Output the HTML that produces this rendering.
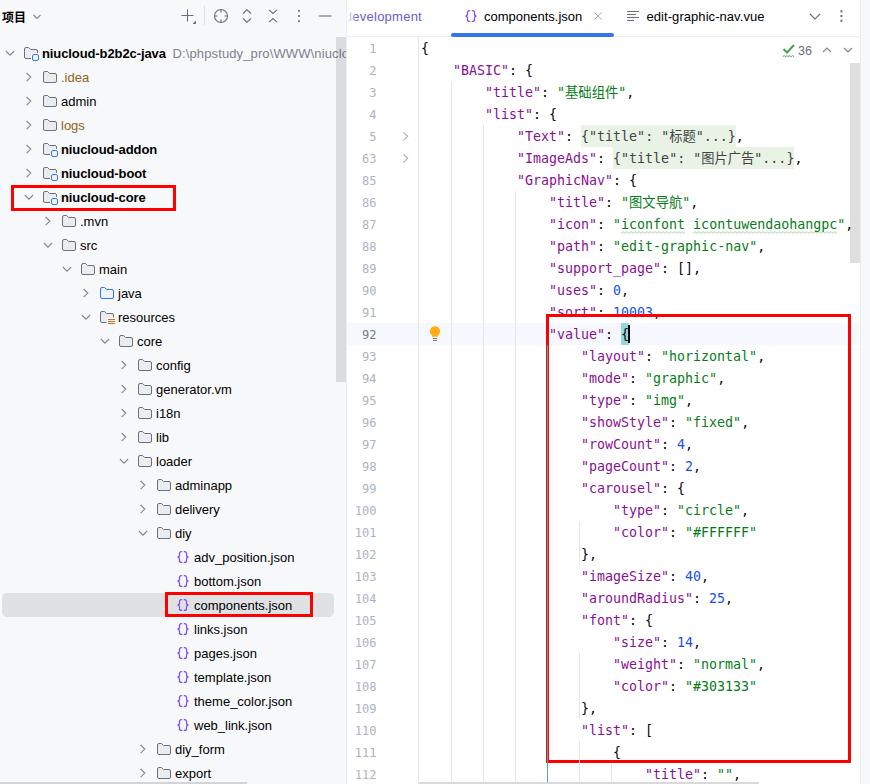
<!DOCTYPE html>
<html><head><meta charset="utf-8"><title>IDE</title>
<style>
html,body{margin:0;padding:0}
body{width:870px;height:784px;overflow:hidden;position:relative;background:#fff;font-family:"Liberation Sans","Noto Sans CJK SC",sans-serif;font-size:13px;color:#000}
#left{position:absolute;left:0;top:0;width:346px;height:784px;background:#f7f8fa;overflow:hidden}
#left .row{position:absolute;left:0;width:346px;height:24px}
#left .row.sel::before{content:"";position:absolute;left:2px;top:0;width:332px;height:24px;border-radius:5px;background:#dfe1e5}
.p{position:absolute;top:4px;width:16px;height:16px}
.p svg{display:block}
.lb{position:absolute;top:1px;line-height:24px;white-space:nowrap;font-size:13px}
.lb.b{font-weight:bold;letter-spacing:-0.1px}
.lb.ex{color:#8f6321}
.path{font-weight:normal;color:#7d8190;margin-left:3px;letter-spacing:0.12px}
#hdr{position:absolute;left:0;top:0;width:346px;height:37px}
#hdr .t{position:absolute;left:2px;top:8px;font-size:12px;font-weight:bold;line-height:20px}
#hdr svg{position:absolute;left:0;top:0}
#vs{position:absolute;left:336px;top:37px;width:10px;height:345px;background:rgba(0,0,0,0.11)}
#hs{position:absolute;left:0;top:782px;width:247px;height:2px;background:#d4d4d6}
#ed{position:absolute;left:347px;top:0;width:513px;height:784px;background:#fff;overflow:hidden}
#sep{position:absolute;left:346px;top:0;width:1px;height:784px;background:#ebecf0}
#tabs{z-index:5;position:absolute;left:0;top:0;width:513px;height:36px;border-bottom:1px solid #ebecf0;background:#fff}
#gut{position:absolute;left:71px;top:37px;width:1px;height:747px;background:#e4e5ea;z-index:3}
.ln{position:absolute;left:0;width:513px;height:22px;font-family:"DejaVu Sans Mono","Liberation Mono","Noto Sans CJK SC",monospace;font-size:13.3px;line-height:24px;white-space:pre}
.ln.cur{background:#f5f8fe}
.ln.cur .num{color:#767a8a}
.num{position:absolute;left:0;top:0;width:29.5px;text-align:right;color:#aeb3c2;font-size:12px}
.code{position:absolute;top:0;color:#080808;height:22px}
.k{color:#871094}
.s{color:#067d17}
.n{color:#1750eb}
.fold{background:#e9f3e5;display:inline-block;height:22px;color:#444;vertical-align:top}
.fold span{color:#444}
.wv{text-decoration:underline wavy #b5d6a8 1px;text-underline-offset:3px}
.br{background:#93d9d9;display:inline-block;height:22px;vertical-align:top}
.caret{position:absolute;width:2px;height:18px;background:#000;top:2px;margin-left:-1px}
.guide{position:absolute;width:1px;background:#e4e5ea;z-index:3}
#rs{position:absolute;left:860px;top:0;width:10px;height:784px;background:#f7f8fa;border-left:1px solid #ebecf0;box-sizing:border-box}
#evs{z-index:5;position:absolute;left:503px;top:63px;width:10px;height:200px;background:rgba(0,0,0,0.125)}
#ehs{z-index:5;position:absolute;left:72px;top:782px;width:340px;height:2px;background:#d9d9d9}
.red{position:absolute;border:3px solid #f00;box-sizing:border-box}
.tab{position:absolute;top:0;height:36px;line-height:34px;font-size:13px;white-space:nowrap}
#insp{z-index:5;position:absolute;left:0;top:37px;width:513px;height:26px}
</style></head><body>
<div id="left">
<div id="hdr"><span class="t">项目</span>
<svg width="346" height="37" viewBox="0 0 346 37" fill="none" stroke="#6c707e" stroke-width="1.1">
<path d="M33.5 15 L37 18.5 L40.5 15" stroke="#818594"/>
<path d="M187.5 9.5 V21.5 M181.5 15.5 H193.5"/>
<path d="M196 20.5 V24 H192.5 Z" fill="#6c707e" stroke="none"/>
<path d="M204.5 6 V25" stroke="#dcdee4" stroke-width="1"/>
<circle cx="221" cy="16" r="6.5"/>
<path d="M221 9.5 V12.5 M221 19.5 V22.5 M214.5 16 H217.5 M224.5 16 H227.5"/>
<path d="M243 13.5 L247 9.8 L251 13.5 M243 18.5 L247 22.2 L251 18.5"/>
<path d="M269 9.8 L273 13.5 L277 9.8 M269 22.2 L273 18.5 L277 22.2"/>
<g fill="#7d8190" stroke="none"><rect x="298" y="9.8" width="2" height="2"/><rect x="298" y="15" width="2" height="2"/><rect x="298" y="20.2" width="2" height="2"/></g>
<path d="M318.5 16 H331.5"/>
</svg>
</div>
<div class="row" style="top:41px"><span style="left:2px" class="p"><svg class="ch" width="16" height="16" viewBox="0 0 16 16"><path d="M3.9 6 L8 10.1 L12.1 6" fill="none" stroke="#818594" stroke-width="1.1"/></svg></span><span style="left:23px" class="p"><svg class="ic" width="16" height="16" viewBox="0 0 16 16"><path d="M8 13.5 H3 Q1.5 13.5 1.5 12 V4 Q1.5 2.5 3 2.5 H5.6 L7.6 4.5 H13 Q14.5 4.5 14.5 6 V8 H8 Z" fill="#ebecf0" stroke="none"/><path d="M8 13.5 H3 Q1.5 13.5 1.5 12 V4 Q1.5 2.5 3 2.5 H5.6 L7.6 4.5 H13 Q14.5 4.5 14.5 6 V8" fill="none" stroke="#6c707e" stroke-width="1"/><rect x="9.5" y="9.5" width="6" height="6" rx="1.5" fill="#edf3ff" stroke="#3574f0" stroke-width="1"/></svg></span><span class="lb b" style="left:42px">niucloud-b2b2c-java<span class="path"> D:\phpstudy_pro\WWW\niucloud-b2b2c-java</span></span></div>
<div class="row" style="top:65px"><span style="left:21px" class="p"><svg class="ch" width="16" height="16" viewBox="0 0 16 16"><path d="M5.6 4 L9.8 8.1 L5.6 12.2" fill="none" stroke="#818594" stroke-width="1.1"/></svg></span><span style="left:42px" class="p"><svg class="ic" width="16" height="16" viewBox="0 0 16 16"><path d="M1.5 4 Q1.5 2.5 3 2.5 H5.6 L7.6 4.5 H13 Q14.5 4.5 14.5 6 V12 Q14.5 13.5 13 13.5 H3 Q1.5 13.5 1.5 12 Z" fill="#ebecf0" stroke="#6c707e" stroke-width="1"/></svg></span><span class="lb ex" style="left:61px">.idea</span></div>
<div class="row" style="top:89px"><span style="left:21px" class="p"><svg class="ch" width="16" height="16" viewBox="0 0 16 16"><path d="M5.6 4 L9.8 8.1 L5.6 12.2" fill="none" stroke="#818594" stroke-width="1.1"/></svg></span><span style="left:42px" class="p"><svg class="ic" width="16" height="16" viewBox="0 0 16 16"><path d="M1.5 4 Q1.5 2.5 3 2.5 H5.6 L7.6 4.5 H13 Q14.5 4.5 14.5 6 V12 Q14.5 13.5 13 13.5 H3 Q1.5 13.5 1.5 12 Z" fill="#ebecf0" stroke="#6c707e" stroke-width="1"/></svg></span><span class="lb" style="left:61px">admin</span></div>
<div class="row" style="top:113px"><span style="left:21px" class="p"><svg class="ch" width="16" height="16" viewBox="0 0 16 16"><path d="M5.6 4 L9.8 8.1 L5.6 12.2" fill="none" stroke="#818594" stroke-width="1.1"/></svg></span><span style="left:42px" class="p"><svg class="ic" width="16" height="16" viewBox="0 0 16 16"><path d="M1.5 4 Q1.5 2.5 3 2.5 H5.6 L7.6 4.5 H13 Q14.5 4.5 14.5 6 V12 Q14.5 13.5 13 13.5 H3 Q1.5 13.5 1.5 12 Z" fill="#ebecf0" stroke="#6c707e" stroke-width="1"/></svg></span><span class="lb ex" style="left:61px">logs</span></div>
<div class="row" style="top:137px"><span style="left:21px" class="p"><svg class="ch" width="16" height="16" viewBox="0 0 16 16"><path d="M5.6 4 L9.8 8.1 L5.6 12.2" fill="none" stroke="#818594" stroke-width="1.1"/></svg></span><span style="left:42px" class="p"><svg class="ic" width="16" height="16" viewBox="0 0 16 16"><path d="M8 13.5 H3 Q1.5 13.5 1.5 12 V4 Q1.5 2.5 3 2.5 H5.6 L7.6 4.5 H13 Q14.5 4.5 14.5 6 V8 H8 Z" fill="#ebecf0" stroke="none"/><path d="M8 13.5 H3 Q1.5 13.5 1.5 12 V4 Q1.5 2.5 3 2.5 H5.6 L7.6 4.5 H13 Q14.5 4.5 14.5 6 V8" fill="none" stroke="#6c707e" stroke-width="1"/><rect x="9.5" y="9.5" width="6" height="6" rx="1.5" fill="#edf3ff" stroke="#3574f0" stroke-width="1"/></svg></span><span class="lb b" style="left:61px">niucloud-addon</span></div>
<div class="row" style="top:161px"><span style="left:21px" class="p"><svg class="ch" width="16" height="16" viewBox="0 0 16 16"><path d="M5.6 4 L9.8 8.1 L5.6 12.2" fill="none" stroke="#818594" stroke-width="1.1"/></svg></span><span style="left:42px" class="p"><svg class="ic" width="16" height="16" viewBox="0 0 16 16"><path d="M8 13.5 H3 Q1.5 13.5 1.5 12 V4 Q1.5 2.5 3 2.5 H5.6 L7.6 4.5 H13 Q14.5 4.5 14.5 6 V8 H8 Z" fill="#ebecf0" stroke="none"/><path d="M8 13.5 H3 Q1.5 13.5 1.5 12 V4 Q1.5 2.5 3 2.5 H5.6 L7.6 4.5 H13 Q14.5 4.5 14.5 6 V8" fill="none" stroke="#6c707e" stroke-width="1"/><rect x="9.5" y="9.5" width="6" height="6" rx="1.5" fill="#edf3ff" stroke="#3574f0" stroke-width="1"/></svg></span><span class="lb b" style="left:61px">niucloud-boot</span></div>
<div class="row" style="top:185px"><span style="left:21px" class="p"><svg class="ch" width="16" height="16" viewBox="0 0 16 16"><path d="M3.9 6 L8 10.1 L12.1 6" fill="none" stroke="#818594" stroke-width="1.1"/></svg></span><span style="left:42px" class="p"><svg class="ic" width="16" height="16" viewBox="0 0 16 16"><path d="M8 13.5 H3 Q1.5 13.5 1.5 12 V4 Q1.5 2.5 3 2.5 H5.6 L7.6 4.5 H13 Q14.5 4.5 14.5 6 V8 H8 Z" fill="#ebecf0" stroke="none"/><path d="M8 13.5 H3 Q1.5 13.5 1.5 12 V4 Q1.5 2.5 3 2.5 H5.6 L7.6 4.5 H13 Q14.5 4.5 14.5 6 V8" fill="none" stroke="#6c707e" stroke-width="1"/><rect x="9.5" y="9.5" width="6" height="6" rx="1.5" fill="#edf3ff" stroke="#3574f0" stroke-width="1"/></svg></span><span class="lb b" style="left:61px">niucloud-core</span></div>
<div class="row" style="top:209px"><span style="left:40px" class="p"><svg class="ch" width="16" height="16" viewBox="0 0 16 16"><path d="M5.6 4 L9.8 8.1 L5.6 12.2" fill="none" stroke="#818594" stroke-width="1.1"/></svg></span><span style="left:61px" class="p"><svg class="ic" width="16" height="16" viewBox="0 0 16 16"><path d="M1.5 4 Q1.5 2.5 3 2.5 H5.6 L7.6 4.5 H13 Q14.5 4.5 14.5 6 V12 Q14.5 13.5 13 13.5 H3 Q1.5 13.5 1.5 12 Z" fill="#ebecf0" stroke="#6c707e" stroke-width="1"/></svg></span><span class="lb" style="left:80px">.mvn</span></div>
<div class="row" style="top:233px"><span style="left:40px" class="p"><svg class="ch" width="16" height="16" viewBox="0 0 16 16"><path d="M3.9 6 L8 10.1 L12.1 6" fill="none" stroke="#818594" stroke-width="1.1"/></svg></span><span style="left:61px" class="p"><svg class="ic" width="16" height="16" viewBox="0 0 16 16"><path d="M1.5 4 Q1.5 2.5 3 2.5 H5.6 L7.6 4.5 H13 Q14.5 4.5 14.5 6 V12 Q14.5 13.5 13 13.5 H3 Q1.5 13.5 1.5 12 Z" fill="#ebecf0" stroke="#6c707e" stroke-width="1"/></svg></span><span class="lb" style="left:80px">src</span></div>
<div class="row" style="top:257px"><span style="left:59px" class="p"><svg class="ch" width="16" height="16" viewBox="0 0 16 16"><path d="M3.9 6 L8 10.1 L12.1 6" fill="none" stroke="#818594" stroke-width="1.1"/></svg></span><span style="left:80px" class="p"><svg class="ic" width="16" height="16" viewBox="0 0 16 16"><path d="M1.5 4 Q1.5 2.5 3 2.5 H5.6 L7.6 4.5 H13 Q14.5 4.5 14.5 6 V12 Q14.5 13.5 13 13.5 H3 Q1.5 13.5 1.5 12 Z" fill="#ebecf0" stroke="#6c707e" stroke-width="1"/></svg></span><span class="lb" style="left:99px">main</span></div>
<div class="row" style="top:281px"><span style="left:78px" class="p"><svg class="ch" width="16" height="16" viewBox="0 0 16 16"><path d="M5.6 4 L9.8 8.1 L5.6 12.2" fill="none" stroke="#818594" stroke-width="1.1"/></svg></span><span style="left:99px" class="p"><svg class="ic" width="16" height="16" viewBox="0 0 16 16"><path d="M1.5 4 Q1.5 2.5 3 2.5 H5.6 L7.6 4.5 H13 Q14.5 4.5 14.5 6 V12 Q14.5 13.5 13 13.5 H3 Q1.5 13.5 1.5 12 Z" fill="#edf3ff" stroke="#3574f0" stroke-width="1"/></svg></span><span class="lb" style="left:118px">java</span></div>
<div class="row" style="top:305px"><span style="left:78px" class="p"><svg class="ch" width="16" height="16" viewBox="0 0 16 16"><path d="M3.9 6 L8 10.1 L12.1 6" fill="none" stroke="#818594" stroke-width="1.1"/></svg></span><span style="left:99px" class="p"><svg class="ic" width="16" height="16" viewBox="0 0 16 16"><path d="M8 13.5 H3 Q1.5 13.5 1.5 12 V4 Q1.5 2.5 3 2.5 H5.6 L7.6 4.5 H13 Q14.5 4.5 14.5 6 V8.5 H7.5 V13.5" fill="#ebecf0" stroke="none"/><path d="M7.5 13.5 H3 Q1.5 13.5 1.5 12 V4 Q1.5 2.5 3 2.5 H5.6 L7.6 4.5 H13 Q14.5 4.5 14.5 6 V8.5" fill="none" stroke="#6c707e" stroke-width="1"/><path d="M9 10.5 H16 M9 12.5 H16 M9 14.5 H16" stroke="#e66d17" stroke-width="1.1"/></svg></span><span class="lb" style="left:118px">resources</span></div>
<div class="row" style="top:329px"><span style="left:97px" class="p"><svg class="ch" width="16" height="16" viewBox="0 0 16 16"><path d="M3.9 6 L8 10.1 L12.1 6" fill="none" stroke="#818594" stroke-width="1.1"/></svg></span><span style="left:118px" class="p"><svg class="ic" width="16" height="16" viewBox="0 0 16 16"><path d="M1.5 4 Q1.5 2.5 3 2.5 H5.6 L7.6 4.5 H13 Q14.5 4.5 14.5 6 V12 Q14.5 13.5 13 13.5 H3 Q1.5 13.5 1.5 12 Z" fill="#ebecf0" stroke="#6c707e" stroke-width="1"/></svg></span><span class="lb" style="left:137px">core</span></div>
<div class="row" style="top:353px"><span style="left:116px" class="p"><svg class="ch" width="16" height="16" viewBox="0 0 16 16"><path d="M5.6 4 L9.8 8.1 L5.6 12.2" fill="none" stroke="#818594" stroke-width="1.1"/></svg></span><span style="left:137px" class="p"><svg class="ic" width="16" height="16" viewBox="0 0 16 16"><path d="M1.5 4 Q1.5 2.5 3 2.5 H5.6 L7.6 4.5 H13 Q14.5 4.5 14.5 6 V12 Q14.5 13.5 13 13.5 H3 Q1.5 13.5 1.5 12 Z" fill="#ebecf0" stroke="#6c707e" stroke-width="1"/></svg></span><span class="lb" style="left:156px">config</span></div>
<div class="row" style="top:377px"><span style="left:116px" class="p"><svg class="ch" width="16" height="16" viewBox="0 0 16 16"><path d="M5.6 4 L9.8 8.1 L5.6 12.2" fill="none" stroke="#818594" stroke-width="1.1"/></svg></span><span style="left:137px" class="p"><svg class="ic" width="16" height="16" viewBox="0 0 16 16"><path d="M1.5 4 Q1.5 2.5 3 2.5 H5.6 L7.6 4.5 H13 Q14.5 4.5 14.5 6 V12 Q14.5 13.5 13 13.5 H3 Q1.5 13.5 1.5 12 Z" fill="#ebecf0" stroke="#6c707e" stroke-width="1"/></svg></span><span class="lb" style="left:156px">generator.vm</span></div>
<div class="row" style="top:401px"><span style="left:116px" class="p"><svg class="ch" width="16" height="16" viewBox="0 0 16 16"><path d="M5.6 4 L9.8 8.1 L5.6 12.2" fill="none" stroke="#818594" stroke-width="1.1"/></svg></span><span style="left:137px" class="p"><svg class="ic" width="16" height="16" viewBox="0 0 16 16"><path d="M1.5 4 Q1.5 2.5 3 2.5 H5.6 L7.6 4.5 H13 Q14.5 4.5 14.5 6 V12 Q14.5 13.5 13 13.5 H3 Q1.5 13.5 1.5 12 Z" fill="#ebecf0" stroke="#6c707e" stroke-width="1"/></svg></span><span class="lb" style="left:156px">i18n</span></div>
<div class="row" style="top:425px"><span style="left:116px" class="p"><svg class="ch" width="16" height="16" viewBox="0 0 16 16"><path d="M5.6 4 L9.8 8.1 L5.6 12.2" fill="none" stroke="#818594" stroke-width="1.1"/></svg></span><span style="left:137px" class="p"><svg class="ic" width="16" height="16" viewBox="0 0 16 16"><path d="M1.5 4 Q1.5 2.5 3 2.5 H5.6 L7.6 4.5 H13 Q14.5 4.5 14.5 6 V12 Q14.5 13.5 13 13.5 H3 Q1.5 13.5 1.5 12 Z" fill="#ebecf0" stroke="#6c707e" stroke-width="1"/></svg></span><span class="lb" style="left:156px">lib</span></div>
<div class="row" style="top:449px"><span style="left:116px" class="p"><svg class="ch" width="16" height="16" viewBox="0 0 16 16"><path d="M3.9 6 L8 10.1 L12.1 6" fill="none" stroke="#818594" stroke-width="1.1"/></svg></span><span style="left:137px" class="p"><svg class="ic" width="16" height="16" viewBox="0 0 16 16"><path d="M1.5 4 Q1.5 2.5 3 2.5 H5.6 L7.6 4.5 H13 Q14.5 4.5 14.5 6 V12 Q14.5 13.5 13 13.5 H3 Q1.5 13.5 1.5 12 Z" fill="#ebecf0" stroke="#6c707e" stroke-width="1"/></svg></span><span class="lb" style="left:156px">loader</span></div>
<div class="row" style="top:473px"><span style="left:135px" class="p"><svg class="ch" width="16" height="16" viewBox="0 0 16 16"><path d="M5.6 4 L9.8 8.1 L5.6 12.2" fill="none" stroke="#818594" stroke-width="1.1"/></svg></span><span style="left:156px" class="p"><svg class="ic" width="16" height="16" viewBox="0 0 16 16"><path d="M1.5 4 Q1.5 2.5 3 2.5 H5.6 L7.6 4.5 H13 Q14.5 4.5 14.5 6 V12 Q14.5 13.5 13 13.5 H3 Q1.5 13.5 1.5 12 Z" fill="#ebecf0" stroke="#6c707e" stroke-width="1"/></svg></span><span class="lb" style="left:175px">adminapp</span></div>
<div class="row" style="top:497px"><span style="left:135px" class="p"><svg class="ch" width="16" height="16" viewBox="0 0 16 16"><path d="M5.6 4 L9.8 8.1 L5.6 12.2" fill="none" stroke="#818594" stroke-width="1.1"/></svg></span><span style="left:156px" class="p"><svg class="ic" width="16" height="16" viewBox="0 0 16 16"><path d="M1.5 4 Q1.5 2.5 3 2.5 H5.6 L7.6 4.5 H13 Q14.5 4.5 14.5 6 V12 Q14.5 13.5 13 13.5 H3 Q1.5 13.5 1.5 12 Z" fill="#ebecf0" stroke="#6c707e" stroke-width="1"/></svg></span><span class="lb" style="left:175px">delivery</span></div>
<div class="row" style="top:521px"><span style="left:135px" class="p"><svg class="ch" width="16" height="16" viewBox="0 0 16 16"><path d="M3.9 6 L8 10.1 L12.1 6" fill="none" stroke="#818594" stroke-width="1.1"/></svg></span><span style="left:156px" class="p"><svg class="ic" width="16" height="16" viewBox="0 0 16 16"><path d="M1.5 4 Q1.5 2.5 3 2.5 H5.6 L7.6 4.5 H13 Q14.5 4.5 14.5 6 V12 Q14.5 13.5 13 13.5 H3 Q1.5 13.5 1.5 12 Z" fill="#ebecf0" stroke="#6c707e" stroke-width="1"/></svg></span><span class="lb" style="left:175px">diy</span></div>
<div class="row" style="top:545px"><span style="left:175px" class="p"><svg class="ic" width="16" height="16" viewBox="0 0 16 16"><path d="M7.2 2.6 H6.5 Q4.5 2.6 4.5 4.6 V6 Q4.5 8 2.4 8 Q4.5 8 4.5 10 V11.4 Q4.5 13.4 6.5 13.4 H7.2 M8.8 2.6 H9.5 Q11.5 2.6 11.5 4.6 V6 Q11.5 8 13.6 8 Q11.5 8 11.5 10 V11.4 Q11.5 13.4 9.5 13.4 H8.8" fill="none" stroke="#834df0" stroke-width="1.25"/></svg></span><span class="lb" style="left:194px">adv_position.json</span></div>
<div class="row" style="top:569px"><span style="left:175px" class="p"><svg class="ic" width="16" height="16" viewBox="0 0 16 16"><path d="M7.2 2.6 H6.5 Q4.5 2.6 4.5 4.6 V6 Q4.5 8 2.4 8 Q4.5 8 4.5 10 V11.4 Q4.5 13.4 6.5 13.4 H7.2 M8.8 2.6 H9.5 Q11.5 2.6 11.5 4.6 V6 Q11.5 8 13.6 8 Q11.5 8 11.5 10 V11.4 Q11.5 13.4 9.5 13.4 H8.8" fill="none" stroke="#834df0" stroke-width="1.25"/></svg></span><span class="lb" style="left:194px">bottom.json</span></div>
<div class="row sel" style="top:593px"><span style="left:175px" class="p"><svg class="ic" width="16" height="16" viewBox="0 0 16 16"><path d="M7.2 2.6 H6.5 Q4.5 2.6 4.5 4.6 V6 Q4.5 8 2.4 8 Q4.5 8 4.5 10 V11.4 Q4.5 13.4 6.5 13.4 H7.2 M8.8 2.6 H9.5 Q11.5 2.6 11.5 4.6 V6 Q11.5 8 13.6 8 Q11.5 8 11.5 10 V11.4 Q11.5 13.4 9.5 13.4 H8.8" fill="none" stroke="#834df0" stroke-width="1.25"/></svg></span><span class="lb" style="left:194px">components.json</span></div>
<div class="row" style="top:617px"><span style="left:175px" class="p"><svg class="ic" width="16" height="16" viewBox="0 0 16 16"><path d="M7.2 2.6 H6.5 Q4.5 2.6 4.5 4.6 V6 Q4.5 8 2.4 8 Q4.5 8 4.5 10 V11.4 Q4.5 13.4 6.5 13.4 H7.2 M8.8 2.6 H9.5 Q11.5 2.6 11.5 4.6 V6 Q11.5 8 13.6 8 Q11.5 8 11.5 10 V11.4 Q11.5 13.4 9.5 13.4 H8.8" fill="none" stroke="#834df0" stroke-width="1.25"/></svg></span><span class="lb" style="left:194px">links.json</span></div>
<div class="row" style="top:641px"><span style="left:175px" class="p"><svg class="ic" width="16" height="16" viewBox="0 0 16 16"><path d="M7.2 2.6 H6.5 Q4.5 2.6 4.5 4.6 V6 Q4.5 8 2.4 8 Q4.5 8 4.5 10 V11.4 Q4.5 13.4 6.5 13.4 H7.2 M8.8 2.6 H9.5 Q11.5 2.6 11.5 4.6 V6 Q11.5 8 13.6 8 Q11.5 8 11.5 10 V11.4 Q11.5 13.4 9.5 13.4 H8.8" fill="none" stroke="#834df0" stroke-width="1.25"/></svg></span><span class="lb" style="left:194px">pages.json</span></div>
<div class="row" style="top:665px"><span style="left:175px" class="p"><svg class="ic" width="16" height="16" viewBox="0 0 16 16"><path d="M7.2 2.6 H6.5 Q4.5 2.6 4.5 4.6 V6 Q4.5 8 2.4 8 Q4.5 8 4.5 10 V11.4 Q4.5 13.4 6.5 13.4 H7.2 M8.8 2.6 H9.5 Q11.5 2.6 11.5 4.6 V6 Q11.5 8 13.6 8 Q11.5 8 11.5 10 V11.4 Q11.5 13.4 9.5 13.4 H8.8" fill="none" stroke="#834df0" stroke-width="1.25"/></svg></span><span class="lb" style="left:194px">template.json</span></div>
<div class="row" style="top:689px"><span style="left:175px" class="p"><svg class="ic" width="16" height="16" viewBox="0 0 16 16"><path d="M7.2 2.6 H6.5 Q4.5 2.6 4.5 4.6 V6 Q4.5 8 2.4 8 Q4.5 8 4.5 10 V11.4 Q4.5 13.4 6.5 13.4 H7.2 M8.8 2.6 H9.5 Q11.5 2.6 11.5 4.6 V6 Q11.5 8 13.6 8 Q11.5 8 11.5 10 V11.4 Q11.5 13.4 9.5 13.4 H8.8" fill="none" stroke="#834df0" stroke-width="1.25"/></svg></span><span class="lb" style="left:194px">theme_color.json</span></div>
<div class="row" style="top:713px"><span style="left:175px" class="p"><svg class="ic" width="16" height="16" viewBox="0 0 16 16"><path d="M7.2 2.6 H6.5 Q4.5 2.6 4.5 4.6 V6 Q4.5 8 2.4 8 Q4.5 8 4.5 10 V11.4 Q4.5 13.4 6.5 13.4 H7.2 M8.8 2.6 H9.5 Q11.5 2.6 11.5 4.6 V6 Q11.5 8 13.6 8 Q11.5 8 11.5 10 V11.4 Q11.5 13.4 9.5 13.4 H8.8" fill="none" stroke="#834df0" stroke-width="1.25"/></svg></span><span class="lb" style="left:194px">web_link.json</span></div>
<div class="row" style="top:737px"><span style="left:135px" class="p"><svg class="ch" width="16" height="16" viewBox="0 0 16 16"><path d="M5.6 4 L9.8 8.1 L5.6 12.2" fill="none" stroke="#818594" stroke-width="1.1"/></svg></span><span style="left:156px" class="p"><svg class="ic" width="16" height="16" viewBox="0 0 16 16"><path d="M1.5 4 Q1.5 2.5 3 2.5 H5.6 L7.6 4.5 H13 Q14.5 4.5 14.5 6 V12 Q14.5 13.5 13 13.5 H3 Q1.5 13.5 1.5 12 Z" fill="#ebecf0" stroke="#6c707e" stroke-width="1"/></svg></span><span class="lb" style="left:175px">diy_form</span></div>
<div class="row" style="top:761px"><span style="left:135px" class="p"><svg class="ch" width="16" height="16" viewBox="0 0 16 16"><path d="M5.6 4 L9.8 8.1 L5.6 12.2" fill="none" stroke="#818594" stroke-width="1.1"/></svg></span><span style="left:156px" class="p"><svg class="ic" width="16" height="16" viewBox="0 0 16 16"><path d="M1.5 4 Q1.5 2.5 3 2.5 H5.6 L7.6 4.5 H13 Q14.5 4.5 14.5 6 V12 Q14.5 13.5 13 13.5 H3 Q1.5 13.5 1.5 12 Z" fill="#ebecf0" stroke="#6c707e" stroke-width="1"/></svg></span><span class="lb" style="left:175px">export</span></div>
<div id="vs"></div><div id="hs"></div>
</div>
<div id="sep"></div>
<div id="ed">
<div id="gut"></div>
<div class="guide" style="left:104px;top:81px;height:704px;background:#e4e5ea"></div>
<div class="guide" style="left:136px;top:125px;height:660px;background:#e4e5ea"></div>
<div class="guide" style="left:168px;top:191px;height:594px;background:#e4e5ea"></div>
<div class="guide" style="left:200px;top:345px;height:440px;background:#5aa9a9"></div>
<div class="guide" style="left:232px;top:521px;height:44px;background:#e4e5ea"></div>
<div class="guide" style="left:232px;top:653px;height:66px;background:#e4e5ea"></div>
<div class="guide" style="left:232px;top:741px;height:44px;background:#e4e5ea"></div>
<div class="guide" style="left:264px;top:763px;height:22px;background:#e4e5ea"></div>
<div class="ln" style="top:37px"><span class="num">1</span><span class="code" style="left:74px">{</span></div>
<div class="ln" style="top:59px"><span class="num">2</span><span class="code" style="left:106px"><span class="k">"BASIC"</span>: {</span></div>
<div class="ln" style="top:81px"><span class="num">3</span><span class="code" style="left:138px"><span class="k">"title"</span>: <span class="s">"基础组件"</span>,</span></div>
<div class="ln" style="top:103px"><span class="num">4</span><span class="code" style="left:138px"><span class="k">"list"</span>: {</span></div>
<div class="ln" style="top:125px"><span class="num">5</span><svg style="position:absolute;left:50px;top:3px" width="16" height="16" viewBox="0 0 16 16"><path d="M6.5 4.3 L10.7 8.3 L6.5 12.3" fill="none" stroke="#a8adbd" stroke-width="1.1"/></svg><span class="code" style="left:170px"><span class="k">"Text"</span>: <span class="fold">{<span class="k">"title"</span>: <span class="s">"标题"</span>...}</span>,</span></div>
<div class="ln" style="top:147px"><span class="num">63</span><svg style="position:absolute;left:50px;top:3px" width="16" height="16" viewBox="0 0 16 16"><path d="M6.5 4.3 L10.7 8.3 L6.5 12.3" fill="none" stroke="#a8adbd" stroke-width="1.1"/></svg><span class="code" style="left:170px"><span class="k">"ImageAds"</span>: <span class="fold">{<span class="k">"title"</span>: <span class="s">"图片广告"</span>...}</span>,</span></div>
<div class="ln" style="top:169px"><span class="num">85</span><span class="code" style="left:170px"><span class="k">"GraphicNav"</span>: {</span></div>
<div class="ln" style="top:191px"><span class="num">86</span><span class="code" style="left:202px"><span class="k">"title"</span>: <span class="s">"图文导航"</span>,</span></div>
<div class="ln" style="top:213px"><span class="num">87</span><svg style="position:absolute;left:0;top:0" width="513" height="22" viewBox="0 0 513 22"><polyline points="274,20.4 276,18.6 278,20.4 280,18.6 282,20.4 284,18.6 286,20.4 288,18.6 290,20.4 292,18.6 294,20.4 296,18.6 298,20.4 300,18.6 302,20.4 304,18.6 306,20.4 308,18.6 310,20.4 312,18.6 314,20.4 316,18.6 318,20.4 320,18.6 322,20.4 324,18.6 326,20.4 328,18.6 330,20.4 332,18.6 334,20.4 336,18.6 338,20.4" fill="none" stroke="#a5d19d" stroke-width="0.9"/><polyline points="346,20.4 348,18.6 350,20.4 352,18.6 354,20.4 356,18.6 358,20.4 360,18.6 362,20.4 364,18.6 366,20.4 368,18.6 370,20.4 372,18.6 374,20.4 376,18.6 378,20.4 380,18.6 382,20.4 384,18.6 386,20.4 388,18.6 390,20.4 392,18.6 394,20.4 396,18.6 398,20.4 400,18.6 402,20.4 404,18.6 406,20.4 408,18.6 410,20.4 412,18.6 414,20.4 416,18.6 418,20.4 420,18.6 422,20.4 424,18.6 426,20.4 428,18.6 430,20.4 432,18.6 434,20.4 436,18.6 438,20.4 440,18.6 442,20.4 444,18.6 446,20.4 448,18.6 450,20.4 452,18.6 454,20.4 456,18.6 458,20.4 460,18.6 462,20.4 464,18.6 466,20.4 468,18.6 470,20.4 472,18.6 474,20.4 476,18.6 478,20.4 480,18.6 482,20.4 484,18.6 486,20.4 488,18.6 490,20.4" fill="none" stroke="#a5d19d" stroke-width="0.9"/></svg><span class="code" style="left:202px"><span class="k">"icon"</span>: <span class="s">"iconfont icontuwendaohangpc"</span>,</span></div>
<div class="ln" style="top:235px"><span class="num">88</span><span class="code" style="left:202px"><span class="k">"path"</span>: <span class="s">"edit-graphic-nav"</span>,</span></div>
<div class="ln" style="top:257px"><span class="num">89</span><span class="code" style="left:202px"><span class="k">"support_page"</span>: [],</span></div>
<div class="ln" style="top:279px"><span class="num">90</span><span class="code" style="left:202px"><span class="k">"uses"</span>: <span class="n">0</span>,</span></div>
<div class="ln" style="top:301px"><span class="num">91</span><span class="code" style="left:202px"><span class="k">"sort"</span>: <span class="n">10003</span>,</span></div>
<div class="ln cur" style="top:323px"><span class="num">92</span><svg style="position:absolute;left:80px;top:1px" width="16" height="20" viewBox="0 0 16 20"><path d="M8 2.3 a5 5 0 0 1 3 9 V12.8 H5 V11.3 a5 5 0 0 1 3 -9 Z" fill="#ffaf0f"/><path d="M5.8 14.5 H10.2 M6.2 16.5 H9.8" stroke="#6c707e" stroke-width="1"/></svg><span class="code" style="left:202px"><span class="k">"value"</span>: <span class="br">{</span><span class="caret"></span></span></div>
<div class="ln" style="top:345px"><span class="num">93</span><span class="code" style="left:234px"><span class="k">"layout"</span>: <span class="s">"horizontal"</span>,</span></div>
<div class="ln" style="top:367px"><span class="num">94</span><span class="code" style="left:234px"><span class="k">"mode"</span>: <span class="s">"graphic"</span>,</span></div>
<div class="ln" style="top:389px"><span class="num">95</span><span class="code" style="left:234px"><span class="k">"type"</span>: <span class="s">"img"</span>,</span></div>
<div class="ln" style="top:411px"><span class="num">96</span><span class="code" style="left:234px"><span class="k">"showStyle"</span>: <span class="s">"fixed"</span>,</span></div>
<div class="ln" style="top:433px"><span class="num">97</span><span class="code" style="left:234px"><span class="k">"rowCount"</span>: <span class="n">4</span>,</span></div>
<div class="ln" style="top:455px"><span class="num">98</span><span class="code" style="left:234px"><span class="k">"pageCount"</span>: <span class="n">2</span>,</span></div>
<div class="ln" style="top:477px"><span class="num">99</span><span class="code" style="left:234px"><span class="k">"carousel"</span>: {</span></div>
<div class="ln" style="top:499px"><span class="num">100</span><span class="code" style="left:266px"><span class="k">"type"</span>: <span class="s">"circle"</span>,</span></div>
<div class="ln" style="top:521px"><span class="num">101</span><span class="code" style="left:266px"><span class="k">"color"</span>: <span class="s">"#FFFFFF"</span></span></div>
<div class="ln" style="top:543px"><span class="num">102</span><span class="code" style="left:234px">},</span></div>
<div class="ln" style="top:565px"><span class="num">103</span><span class="code" style="left:234px"><span class="k">"imageSize"</span>: <span class="n">40</span>,</span></div>
<div class="ln" style="top:587px"><span class="num">104</span><span class="code" style="left:234px"><span class="k">"aroundRadius"</span>: <span class="n">25</span>,</span></div>
<div class="ln" style="top:609px"><span class="num">105</span><span class="code" style="left:234px"><span class="k">"font"</span>: {</span></div>
<div class="ln" style="top:631px"><span class="num">106</span><span class="code" style="left:266px"><span class="k">"size"</span>: <span class="n">14</span>,</span></div>
<div class="ln" style="top:653px"><span class="num">107</span><span class="code" style="left:266px"><span class="k">"weight"</span>: <span class="s">"normal"</span>,</span></div>
<div class="ln" style="top:675px"><span class="num">108</span><span class="code" style="left:266px"><span class="k">"color"</span>: <span class="s">"#303133"</span></span></div>
<div class="ln" style="top:697px"><span class="num">109</span><span class="code" style="left:234px">},</span></div>
<div class="ln" style="top:719px"><span class="num">110</span><span class="code" style="left:234px"><span class="k">"list"</span>: [</span></div>
<div class="ln" style="top:741px"><span class="num">111</span><span class="code" style="left:266px">{</span></div>
<div class="ln" style="top:763px"><span class="num">112</span><span class="code" style="left:298px"><span class="k">"title"</span>: <span class="s">""</span>,</span></div>
<div id="insp">
<svg width="513" height="26" viewBox="0 0 513 26" fill="none">
<path d="M436.5 12 L440 15.5 L447 8" stroke="#459f58" stroke-width="2"/>
<path d="M435.8 20 l1.4 -1.7 l1.4 1.7 l1.4 -1.7 l1.4 1.7 l1.4 -1.7 l1.4 1.7 l1.4 -1.7 l1.4 1.7" stroke="#4aa55e" stroke-width="0.9"/>
<path d="M476 15 L480 11 L484 15" stroke="#818594" stroke-width="1.1"/>
<path d="M497 11 L501 15 L505 11" stroke="#818594" stroke-width="1.1"/>
<text x="451" y="17.5" font-family="Liberation Sans, sans-serif" font-size="12.5" fill="#6c707e">36</text>
</svg>
</div>
<div id="tabs">
<span class="tab" style="right:438px;color:#6660d0;letter-spacing:0.25px">development</span>
<div style="position:absolute;left:0;top:0;width:10px;height:35px;background:linear-gradient(to right,#fff 0%,rgba(255,255,255,0))"></div>
<svg style="position:absolute;left:116px;top:8px" width="16" height="16" viewBox="0 0 16 16"><path d="M7.2 2.6 H6.5 Q4.5 2.6 4.5 4.6 V6 Q4.5 8 2.4 8 Q4.5 8 4.5 10 V11.4 Q4.5 13.4 6.5 13.4 H7.2 M8.8 2.6 H9.5 Q11.5 2.6 11.5 4.6 V6 Q11.5 8 13.6 8 Q11.5 8 11.5 10 V11.4 Q11.5 13.4 9.5 13.4 H8.8" fill="none" stroke="#834df0" stroke-width="1.25"/></svg>
<span class="tab" style="left:137px;color:#000">components.json</span>
<svg style="position:absolute;left:243px;top:8px" width="16" height="16" viewBox="0 0 16 16"><path d="M4.5 4.5 L11.5 11.5 M11.5 4.5 L4.5 11.5" stroke="#a8adbd" stroke-width="1"/></svg>
<div style="position:absolute;left:104px;top:33px;width:163px;height:4px;border-radius:2px;background:#3574f0"></div>
<svg style="position:absolute;left:278px;top:8px" width="16" height="16" viewBox="0 0 16 16"><path d="M2 3.5 H14 M2 6.5 H11 M2 9.5 H14 M2 12.5 H9" stroke="#6c707e" stroke-width="1"/></svg>
<span class="tab" style="left:299.5px;color:#000;letter-spacing:0.06px">edit-graphic-nav.vue</span>
<svg style="position:absolute;left:460px;top:8px" width="16" height="16" viewBox="0 0 16 16"><path d="M3 6 L8 11 L13 6" fill="none" stroke="#6c707e" stroke-width="1.1"/></svg>
<svg style="position:absolute;left:486px;top:8px" width="16" height="16" viewBox="0 0 16 16" fill="#6c707e"><rect x="7.4" y="2.3" width="2" height="2"/><rect x="7.4" y="7" width="2" height="2"/><rect x="7.4" y="11.8" width="2" height="2"/></svg>
</div>
<div id="evs"></div><div id="ehs"></div>
</div>
<div id="rs"></div>
<div class="red" style="left:11px;top:185px;width:165px;height:26px"></div>
<div class="red" style="left:165px;top:592px;width:148px;height:25px"></div>
<div class="red" style="left:546px;top:314px;width:305px;height:449px"></div>
</body></html>
